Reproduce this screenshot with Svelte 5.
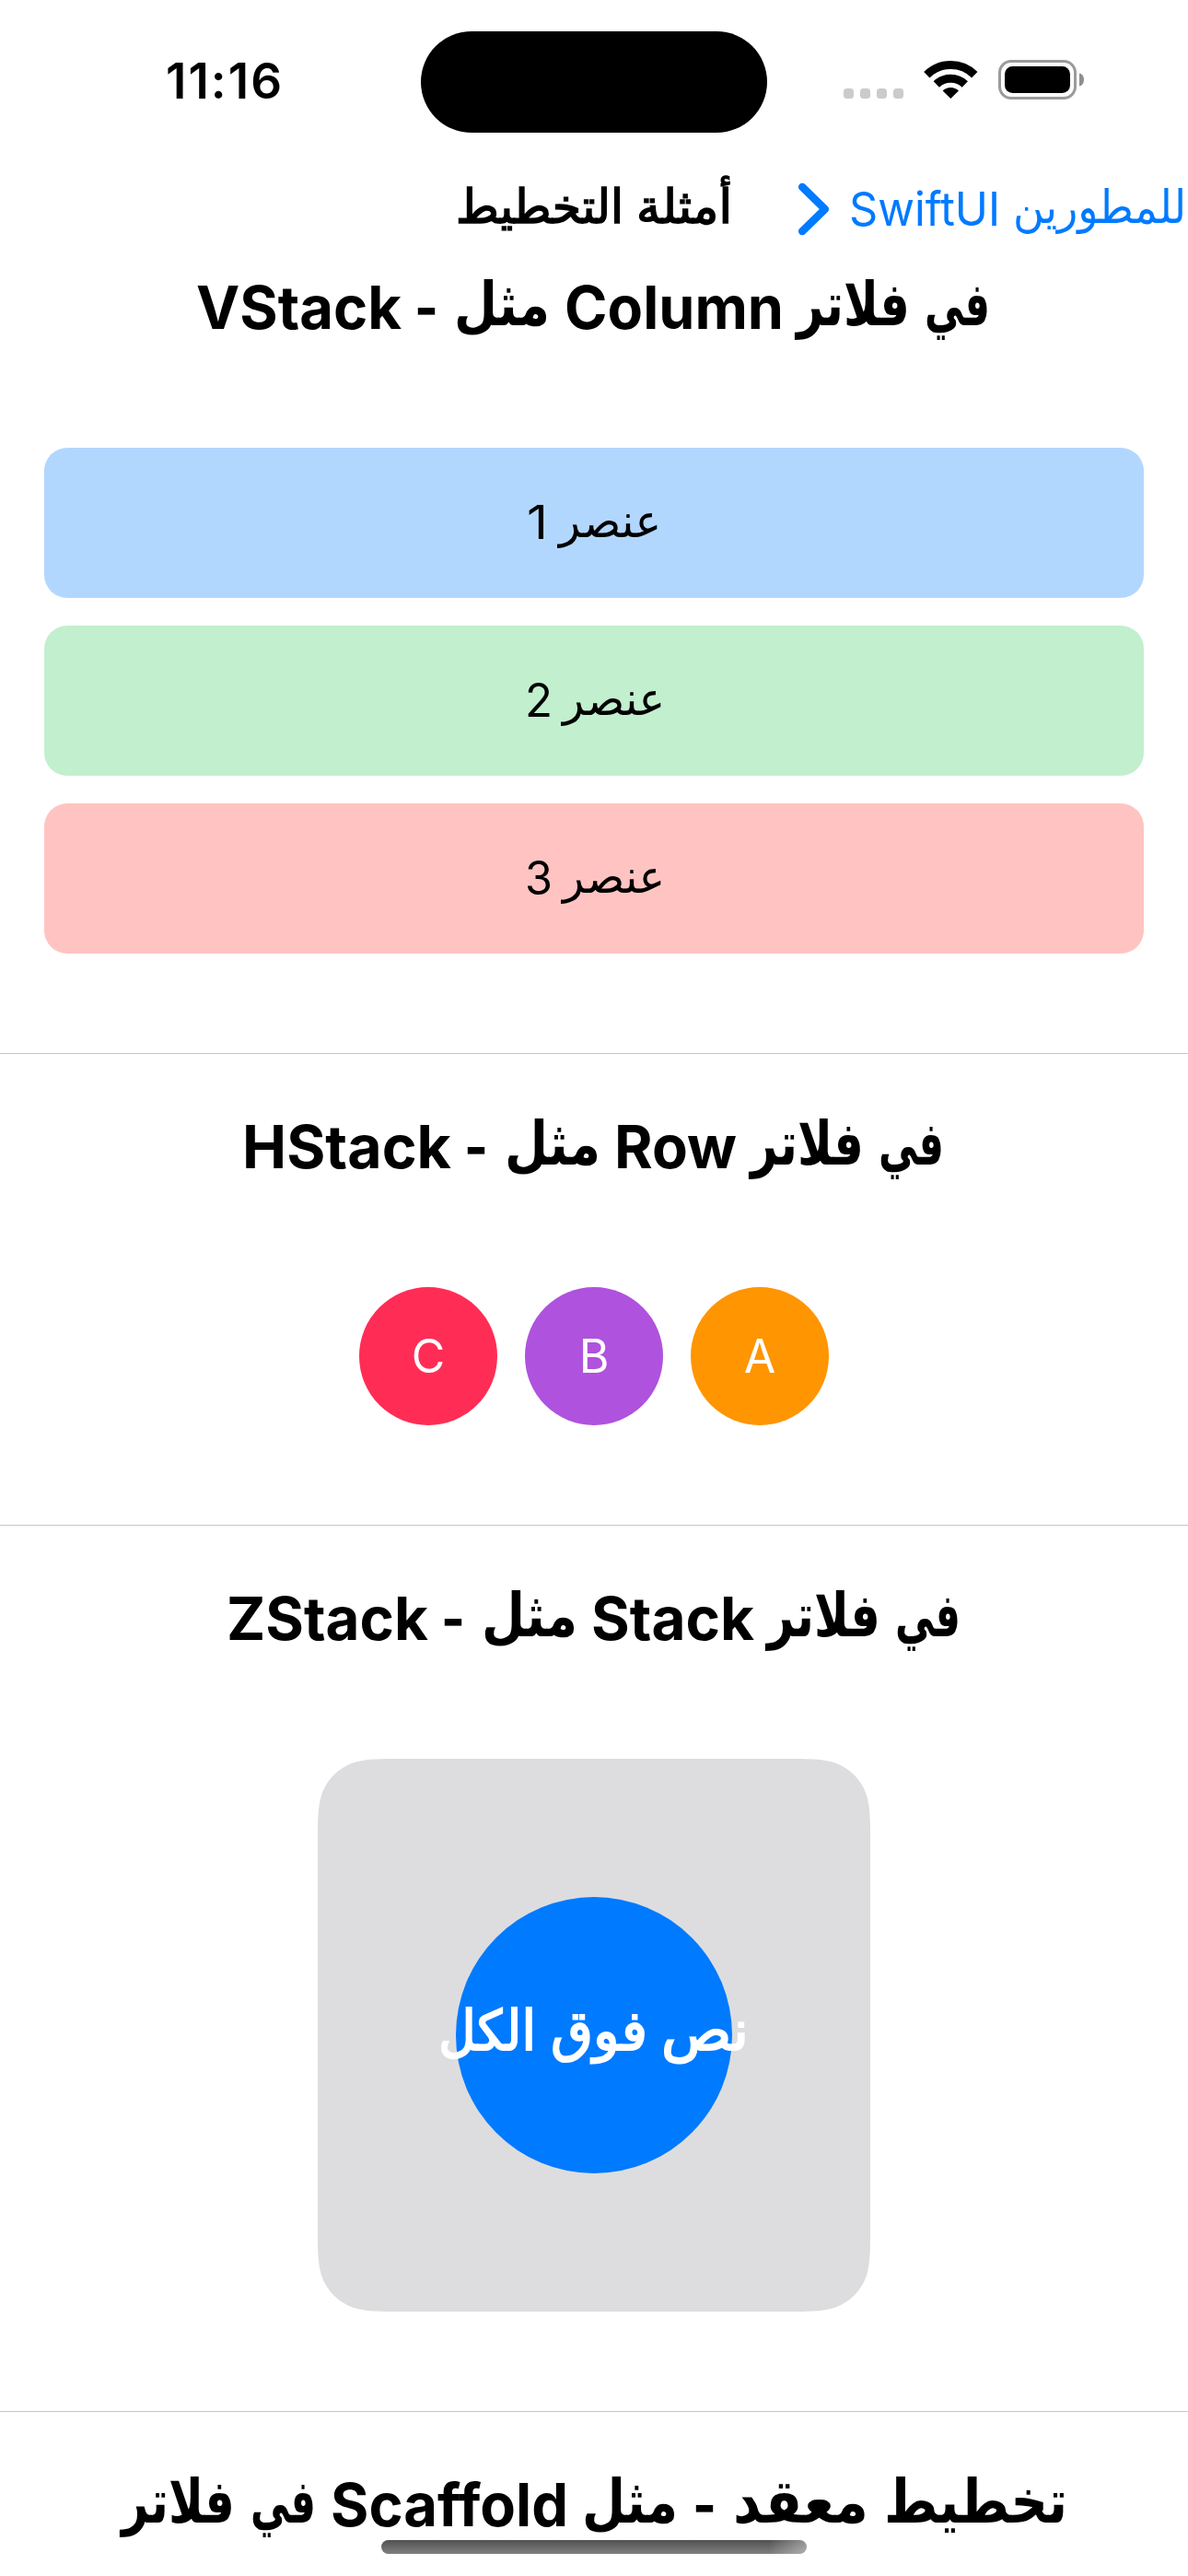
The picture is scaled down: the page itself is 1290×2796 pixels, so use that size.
<script>
  // Each heading is a row of word runs: left edge and width in pixels.
  const h1 = [
    { t: 'VStack', x: 213, w: 223 },
    { t: '-', x: 450, w: 26 },
    { t: 'مثل', x: 493, w: 104, ar: true },
    { t: 'Column', x: 613, w: 238 },
    { t: 'فلاتر', x: 865, w: 123, ar: true },
    { t: 'في', x: 1004, w: 71, ar: true }
  ];
  const h2 = [
    { t: 'HStack', x: 263, w: 227 },
    { t: '-', x: 504, w: 26 },
    { t: 'مثل', x: 548, w: 104, ar: true },
    { t: 'Row', x: 667, w: 133 },
    { t: 'فلاتر', x: 815, w: 123, ar: true },
    { t: 'في', x: 954, w: 71, ar: true }
  ];
  const h3 = [
    { t: 'ZStack', x: 246, w: 219 },
    { t: '-', x: 479, w: 26 },
    { t: 'مثل', x: 523, w: 104, ar: true },
    { t: 'Stack', x: 642, w: 177 },
    { t: 'فلاتر', x: 833, w: 123, ar: true },
    { t: 'في', x: 972, w: 71, ar: true }
  ];
  const h4 = [
    { t: 'فلاتر', x: 132, w: 123, ar: true },
    { t: 'في', x: 272, w: 71, ar: true },
    { t: 'Scaffold', x: 359, w: 258 },
    { t: 'مثل', x: 632, w: 104, ar: true },
    { t: '-', x: 752, w: 26 },
    { t: 'معقد', x: 796, w: 147, ar: true },
    { t: 'تخطيط', x: 960, w: 199, ar: true }
  ];
  const rows = [
    { n: '1', x: 572, w: 23, wx: 607, cls: 'blue' },
    { n: '2', x: 570, w: 30, wx: 611, cls: 'green' },
    { n: '3', x: 570, w: 30, wx: 611, cls: 'red' }
  ];
  const circles = [
    { t: 'A', cls: 'orange' },
    { t: 'B', cls: 'purple' },
    { t: 'C', cls: 'pink' }
  ];

  // Continuous-curvature rounded square with side s and radius r.
  function squircle(s, r) {
    const corner = [
      [1.08849, 0], [0.86841, 0], [0.63149, 0.07491],
      [0.37282, 0.16906], [0.16906, 0.37282], [0.07491, 0.63149],
      [0, 0.86841], [0, 1.08849], [0, 1.52866]
    ].map(([x, y]) => [x * r, y * r]);
    const p = (pts) => 'C' + pts.map((q) => q.join(' ')).join(' ');
    const e = 1.52866 * r;
    const swap = (pts) => pts.map(([x, y]) => [x, s - y]);
    // Reversing a corner needs its start point, which is the previous line's end.
    const rev = (pts) => [[e, 0], ...pts].slice(0, -1).reverse();
    const tl = p(corner);
    const bl = p(rev(swap(corner)).slice(0, -1).concat([[e, s]]));
    const br = p(corner.map(([x, y]) => [s - x, s - y]));
    const tr = p(rev(corner.map(([x, y]) => [s - x, y])).slice(0, -1).concat([[s - e, 0]]));
    return `M${e} 0${tl}L0 ${s - e}${bl}L${s - e} ${s}${br}L${s} ${e}${tr}Z`;
  }
</script>

{#snippet heading(runs)}
  <h2>
    <svg width="1290" height="120" viewBox="0 0 1290 120">
      {#each runs as r}
        <text class:ar={r.ar} x={r.x} y={r.ar ? 76 : 80} textLength={r.w} lengthAdjust="spacingAndGlyphs">{r.t}</text>
      {/each}
    </svg>
  </h2>
{/snippet}

<div class="screen">
  <header class="status">
    <span class="time">11:16</span>
    <div class="island"></div>
    <svg class="icons" width="262" height="44" viewBox="0 0 262 44">
      <g fill="#cbcbcb">
        <rect x="0" y="31" width="11" height="11" rx="3.5" />
        <rect x="18" y="31" width="11" height="11" rx="3.5" />
        <rect x="36" y="31" width="11" height="11" rx="3.5" />
        <rect x="54" y="31" width="11" height="11" rx="3.5" />
      </g>
      <g fill="none" stroke="#000" stroke-width="9">
        <path d="M90.3 16.2a37 37 0 0 1 52 0" />
        <path d="M100.8 26.5a22.3 22.3 0 0 1 31 0" />
      </g>
      <path d="M116.3 42l-8.700-8.500a12.500 12.500 0 0 1 17.400 0z" />
      <rect x="169.5" y="1.500" width="82" height="40" rx="12.500" fill="none" stroke="#9b9b9b" stroke-width="3" />
      <rect x="175" y="7" width="71" height="29" rx="8.500" />
      <path d="M256 14.500c3 .6 5 3.200 5 7s-2 6.400-5 7z" fill="#8f8f8f" />
    </svg>
  </header>

  <nav>
    <svg width="1290" height="100" viewBox="0 0 1290 100">
      <text class="title" x="495" y="65" textLength="182" lengthAdjust="spacingAndGlyphs">التخطيط</text>
      <text class="title" x="691" y="65" textLength="104" lengthAdjust="spacingAndGlyphs">أمثلة</text>
      <path class="chevron" d="M871.2 26L895.8 50L871.2 74" />
      <text class="back" x="922" y="68" textLength="164" lengthAdjust="spacingAndGlyphs">SwiftUI</text>
      <text class="back ar" x="1100" y="65" textLength="188" lengthAdjust="spacingAndGlyphs">للمطورين</text>
    </svg>
  </nav>

  <main>
    <section>
      {@render heading(h1)}
      <div class="vstack">
        {#each rows as r}
          <div class="item {r.cls}">
            <svg width="1290" height="163" viewBox="0 0 1290 163">
              <text x={r.x} y="99" textLength={r.w} lengthAdjust="spacingAndGlyphs">{r.n}</text>
              <text class="ar" x={r.wx} y="97" textLength="111" lengthAdjust="spacingAndGlyphs">عنصر</text>
            </svg>
          </div>
        {/each}
      </div>
    </section>
    <section>
      {@render heading(h2)}
      <div class="hstack" dir="rtl">
        {#each circles as c}
          <div class="dot {c.cls}">{c.t}</div>
        {/each}
      </div>
    </section>
    <section>
      {@render heading(h3)}
      <div class="zstack">
        <svg width="600" height="600" viewBox="0 0 600 600">
          <path fill="#dddddf" d={squircle(600, 60)} />
          <circle cx="300" cy="300" r="150" fill="#007aff" />
          <text x="131" y="316" textLength="106" lengthAdjust="spacingAndGlyphs">الكل</text>
          <text x="253" y="316" textLength="105" lengthAdjust="spacingAndGlyphs">فوق</text>
          <text x="373" y="316" textLength="95" lengthAdjust="spacingAndGlyphs">نص</text>
        </svg>
      </div>
    </section>
    <section>
      {@render heading(h4)}
    </section>
  </main>
  <div class="home"></div>
</div>

<style>
  :global(body) { margin: 0; background: #fff; }
  .screen { position: relative; width: 1290px; height: 2796px; overflow: hidden; background: #fff; color: #000; font-family: Inter, 'DejaVu Sans', sans-serif; display: flex; flex-direction: column; }
  svg { display: block; direction: ltr; }
  .status { height: 177px; flex: none; display: grid; grid-template-columns: 457px 376px 1fr; box-sizing: border-box; padding-top: 33px; align-items: start; }
  .time { padding-left: 180px; padding-top: 23px; font-size: 53px; line-height: 64px; font-weight: 600; letter-spacing: 2px; }
  .island { height: 110px; margin-top: 1px; border-radius: 55px; background: #000; }
  .icons { margin: 32px 0 0 83px; }
  nav { height: 100px; flex: none; }
  .title { font-family: 'DejaVu Sans', sans-serif; font-size: 51px; stroke: #000; stroke-width: 1.6px; }
  .back { font-size: 51px; fill: #007aff; }
  .back.ar { font-size: 50px; }
  .ar { font-family: 'DejaVu Sans', sans-serif; }
  .chevron { fill: none; stroke: #007aff; stroke-width: 8.5; stroke-linecap: round; stroke-linejoin: round; }
  main { flex: 1; }
  section { border-bottom: 1px solid #c6c6c8; }
  section:last-child { border: 0; }
  h2 { margin: 0; height: 120px; font-size: 65px; font-weight: 700; }
  h2 text:not(.ar) { font-variant-ligatures: none; }
  h2 .ar { font-size: 66px; }
  section + section h2 { padding: 44px 0 1px; }
  .vstack { display: flex; flex-direction: column; gap: 30px; padding: 89px 48px 108px; }
  .item { height: 163px; border-radius: 25px; font-size: 50px; display: flex; justify-content: center; overflow: hidden; }
  .item svg { flex: none; }
  .item .ar { font-size: 50px; }
  .blue { background: #b2d7ff; }
  .green { background: #c2efce; }
  .red { background: #ffc4c2; }
  .hstack { display: flex; justify-content: center; gap: 30px; padding: 88px 0 108px; }
  .dot { width: 150px; height: 150px; border-radius: 50%; color: #fff; font-size: 50px; line-height: 151px; text-align: center; }
  .orange { background: #ff9500; }
  .purple { background: #af52de; }
  .pink { background: #ff2d55; }
  .zstack { display: flex; justify-content: center; padding: 88px 0 108px; }
  .zstack text { font-family: 'DejaVu Sans', sans-serif; font-size: 60px; fill: #fff; stroke: #fff; stroke-width: 2px; }
  .home { position: absolute; left: 414px; top: 2757px; width: 462px; height: 15px; border-radius: 8px; background: linear-gradient(90deg, transparent 91%, rgba(255, 255, 255, .38)), linear-gradient(#505050, #808080); }
</style>
